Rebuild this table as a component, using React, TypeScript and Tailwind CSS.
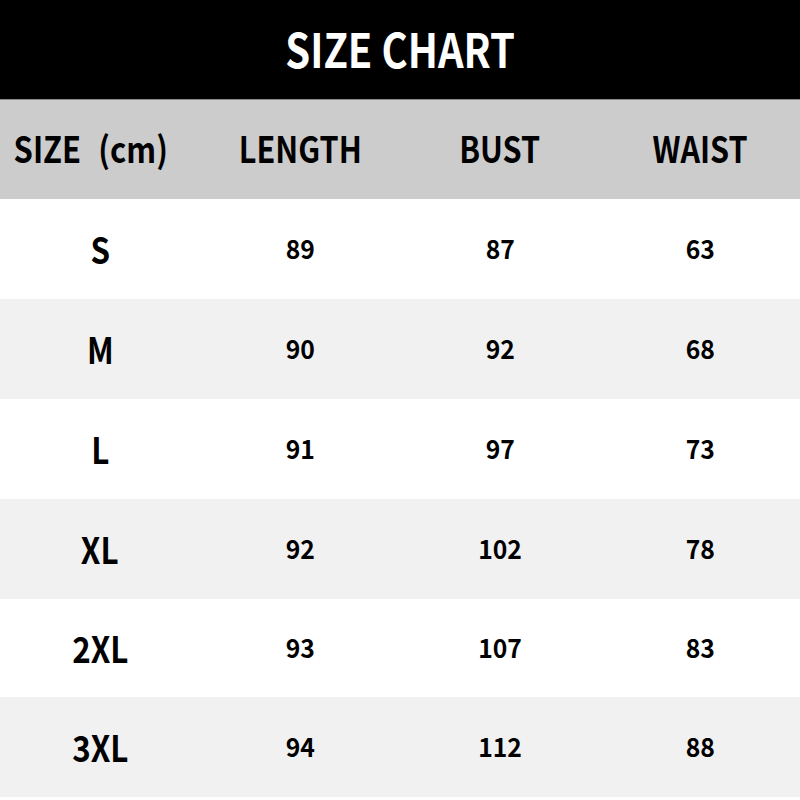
import React from "react";

const rows = [
  { size: "S", l: "89", b: "87", w: "63", bg: "bg-white", h: "h-[100px]" },
  { size: "M", l: "90", b: "92", w: "68", bg: "bg-[#f1f1f1]", h: "h-[100px]" },
  { size: "L", l: "91", b: "97", w: "73", bg: "bg-white", h: "h-[100px]" },
  { size: "XL", l: "92", b: "102", w: "78", bg: "bg-[#f1f1f1]", h: "h-[100px]" },
  { size: "2XL", l: "93", b: "107", w: "83", bg: "bg-white", h: "h-[98px]" },
  { size: "3XL", l: "94", b: "112", w: "88", bg: "bg-[#f1f1f1]", h: "h-[100px]" },
];

export default function App() {
  return (
    <div
      className="w-[800px] h-[800px] bg-white text-black font-bold flex flex-col overflow-hidden"
      style={{ fontFamily: '"Noto Sans CJK SC", "Noto Sans", sans-serif' }}
    >
      <div className="h-[99px] bg-black flex items-center justify-center">
        <span className="text-white text-[47px] leading-none inline-block scale-x-[0.85] -translate-y-[2px]">SIZE CHART</span>
      </div>
      <div className="h-[1px] bg-[#8a8a8a]" />
      <div className="h-[99px] pb-[5px] bg-[#cccccc] grid grid-cols-4 items-center text-[36px] leading-none">
        <div className="flex justify-center">
          <span className="inline-block scale-x-[0.86] -translate-x-[9px] whitespace-nowrap">
            SIZE<span className="ml-[20px]">(cm)</span>
          </span>
        </div>
        <div className="flex justify-center"><span className="inline-block scale-x-[0.85]">LENGTH</span></div>
        <div className="flex justify-center"><span className="inline-block scale-x-[0.85]">BUST</span></div>
        <div className="flex justify-center"><span className="inline-block scale-x-[0.85]">WAIST</span></div>
      </div>
      {rows.map((r) => (
        <div key={r.size} className={`${r.h} ${r.bg} pb-[2px] grid grid-cols-4 items-center leading-none`}>
          <div className="flex justify-center text-[36px]"><span className="inline-block scale-x-[0.87]">{r.size}</span></div>
          <div className="flex justify-center text-[26px]"><span className="inline-block scale-x-[0.95]">{r.l}</span></div>
          <div className="flex justify-center text-[26px]"><span className="inline-block scale-x-[0.95]">{r.b}</span></div>
          <div className="flex justify-center text-[26px]"><span className="inline-block scale-x-[0.95]">{r.w}</span></div>
        </div>
      ))}
      <div className="h-[3px] bg-white" />
    </div>
  );
}
